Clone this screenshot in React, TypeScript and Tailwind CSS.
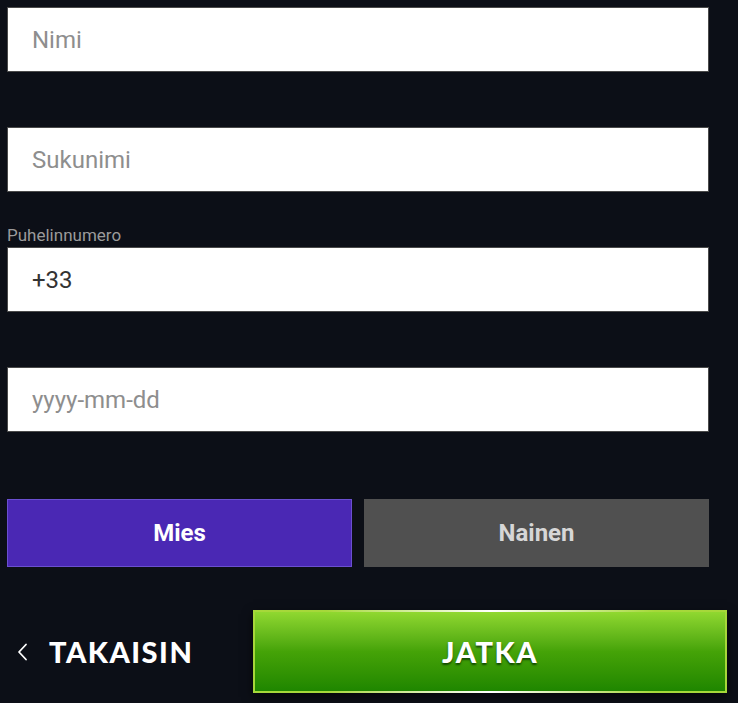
import { useState } from 'react';

const inputCls =
    'block w-full h-[65px] bg-white border border-[#4a4a4a] pl-6 text-[24px] text-[#333] placeholder:text-[#8e8e8e] outline-none';

export default function App() {
    const [gender, setGender] = useState<'m' | 'f'>('m');

    return (
        <div
            className="w-[738px] h-[703px] bg-[#0c0f17] overflow-hidden"
            style={{ fontFamily: 'Roboto, "Liberation Sans", sans-serif' }}
        >
            <div className="pl-[7px] pr-[29px] pt-[7px]">
                <input className={inputCls} placeholder="Nimi" />
                <input className={`${inputCls} mt-[55px]`} placeholder="Sukunimi" />

                <label className="block mt-[33px] mb-[2px] text-[17px] leading-[20px] text-[#9b9b9b]">
                    Puhelinnumero
                </label>
                <input className={inputCls} defaultValue="+33" />

                <input className={`${inputCls} mt-[55px]`} placeholder="yyyy-mm-dd" />

                {/* sukupuoli */}
                <div className="mt-[67px] grid grid-cols-2 gap-3">
                    <button
                        onClick={() => setGender('m')}
                        className={`h-[68px] text-[24px] font-bold border ${
                            gender === 'm'
                                ? 'bg-[#4a28b4] border-[#6b4fd0] text-white'
                                : 'bg-[#505050] border-[#505050] text-[#d6d6d6]'
                        }`}
                    >
                        Mies
                    </button>
                    <button
                        onClick={() => setGender('f')}
                        className={`h-[68px] text-[24px] font-bold border ${
                            gender === 'f'
                                ? 'bg-[#4a28b4] border-[#6b4fd0] text-white'
                                : 'bg-[#505050] border-[#505050] text-[#d6d6d6]'
                        }`}
                    >
                        Nainen
                    </button>
                </div>
            </div>

            <div className="mt-[43px] flex items-center pl-[17px] pr-[11px]">
                <button
                    className="flex items-center gap-[21px] text-white text-[29px] font-black tracking-[1.5px]"
                    style={{ fontFamily: 'Lato, "Liberation Sans", sans-serif' }}
                >
                    <svg width="11" height="18" viewBox="0 0 11 18" fill="none">
                        <path d="M9 1.5 2 9l7 7.5" stroke="white" strokeWidth="1.8" strokeLinecap="round" strokeLinejoin="round" />
                    </svg>
                    TAKAISIN
                </button>

                <button
                    className="ml-auto w-[474px] h-[83px] relative border-2 border-[#a6d83a] bg-gradient-to-b from-[#90d830] via-[#45a308] to-[#1e8600] shadow-[0_4px_10px_rgba(0,0,0,0.6)] text-white text-[29px] font-black tracking-[1.5px] [text-shadow:0_2px_2px_rgba(0,40,0,0.7)]"
                    style={{ fontFamily: 'Lato, "Liberation Sans", sans-serif' }}
                >
                    <span className="absolute left-[15%] right-[15%] -top-[2px] h-[2px] bg-gradient-to-r from-transparent via-white to-transparent" />
                    <span className="absolute left-[15%] right-[15%] -bottom-[2px] h-[2px] bg-gradient-to-r from-transparent via-white to-transparent" />
                    JATKA
                </button>
            </div>
        </div>
    );
}
